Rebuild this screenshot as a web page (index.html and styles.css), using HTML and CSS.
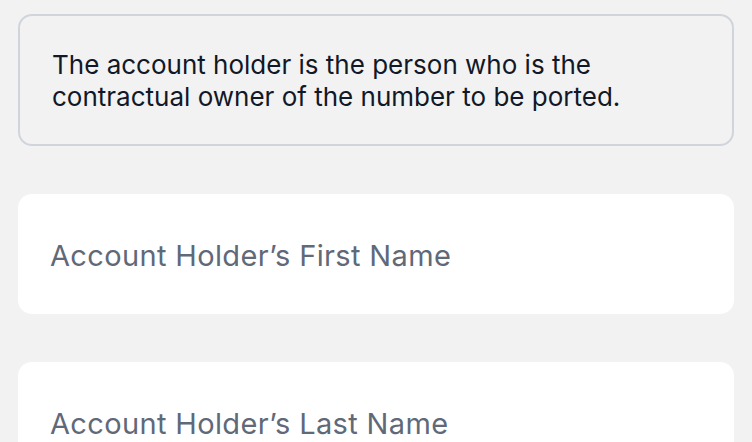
FILE: index.html
```html
<!DOCTYPE html>
<html>
<head>
<meta charset="utf-8">
<link rel="stylesheet" href="styles.css">
</head>
<body>
<div class="page">
  <div class="info">
    <p class="info-text">The account holder is the person who is the contractual owner of the number to be ported.</p>
  </div>
  <div class="field"><input class="field-input" type="text" placeholder="Account Holder’s First Name"></div>
  <div class="field"><input class="field-input" type="text" placeholder="Account Holder’s Last Name"></div>
</div>
</body>
</html>
```
FILE: styles.css
```css
html, body {
  margin: 0;
  padding: 0;
  background: #f2f2f2;
}
body {
  font-family: "Inter", "Noto Sans", sans-serif;
}
.page {
  display: flex;
  flex-direction: column;
  gap: 48px;
  padding: 14px 18px 0;
}
.info {
  border: 2px solid #d0d5dc;
  border-radius: 14px;
  padding: 33px 32px 31px;
}
.info-text {
  margin: 0;
  font-size: 26px;
  line-height: 32px;
  color: #111827;
  max-width: 580px;
}
.field {
  background: #fff;
  border-radius: 14px;
  height: 120px;
  box-sizing: border-box;
  display: flex;
  align-items: center;
  padding: 2px 32px 0;
  flex-shrink: 0;
}
.field-input {
  border: 0;
  outline: none;
  background: transparent;
  width: 100%;
  font-family: inherit;
  font-size: 29px;
  letter-spacing: 0.35px;
  color: #111827;
  padding: 0;
}
.field-input::placeholder {
  color: #5f6978;
  opacity: 1;
}
```
